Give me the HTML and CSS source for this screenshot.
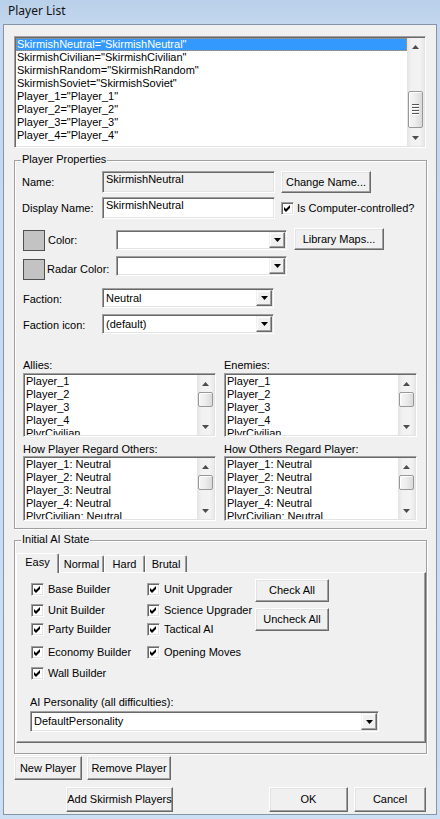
FILE: index.html
```html
<!DOCTYPE html>
<html>
<head>
<meta charset="utf-8">
<title>Player List</title>
<link rel="stylesheet" href="styles.css">
</head>
<body>
<div class="window">
  <div class="titlebar">Player List</div>
  <div class="client">
    <div class="sunken listbox main-list">
      <ul class="items">
        <li class="sel">SkirmishNeutral="SkirmishNeutral"</li>
        <li>SkirmishCivilian="SkirmishCivilian"</li>
        <li>SkirmishRandom="SkirmishRandom"</li>
        <li>SkirmishSoviet="SkirmishSoviet"</li>
        <li>Player_1="Player_1"</li>
        <li>Player_2="Player_2"</li>
        <li>Player_3="Player_3"</li>
        <li>Player_4="Player_4"</li>
      </ul>
      <div class="vscroll">
        <div class="sb-arrow"><svg width="7" height="4" viewBox="0 0 7 4"><polygon points="3.5,0 7,4 0,4" fill="#4d4d4d"/></svg></div>
        <div class="sb-track"><div class="sb-thumb main-thumb"><i class="grip"></i><i class="grip"></i><i class="grip"></i><i class="grip"></i></div></div>
        <div class="sb-arrow"><svg width="7" height="4" viewBox="0 0 7 4"><polygon points="0,0 7,0 3.5,4" fill="#4d4d4d"/></svg></div>
      </div>
    </div>

    <div class="group props">
      <span class="group-title">Player Properties</span>
      <div class="row r-name">
        <span class="lbl lbl-name">Name:</span>
        <div class="sunken edit disabled">SkirmishNeutral</div>
        <div class="btn b-change">Change Name...</div>
      </div>
      <div class="row r-disp">
        <span class="lbl lbl-name">Display Name:</span>
        <div class="sunken edit">SkirmishNeutral</div>
        <div class="check-item ci-comp"><span class="sunken chk"><svg width="7" height="7" viewBox="0 0 7 7"><polygon points="0,2 2,4 6,0 6,3 2,7 0,5" fill="#000"/></svg></span><span class="chk-lbl">Is Computer-controlled?</span></div>
      </div>
      <div class="row r-color">
        <span class="swatch"></span>
        <span class="lbl lbl-color">Color:</span>
        <div class="sunken combo c-color"><span class="val"></span><span class="drop"><svg width="7" height="4" viewBox="0 0 7 4"><polygon points="0,0 7,0 3.5,4" fill="#000"/></svg></span></div>
        <div class="btn b-lib">Library Maps...</div>
      </div>
      <div class="row r-radar">
        <span class="swatch"></span>
        <span class="lbl lbl-radar">Radar Color:</span>
        <div class="sunken combo c-color"><span class="val"></span><span class="drop"><svg width="7" height="4" viewBox="0 0 7 4"><polygon points="0,0 7,0 3.5,4" fill="#000"/></svg></span></div>
      </div>
      <div class="row r-faction">
        <span class="lbl lbl-fac">Faction:</span>
        <div class="sunken combo c-fac"><span class="val">Neutral</span><span class="drop"><svg width="7" height="4" viewBox="0 0 7 4"><polygon points="0,0 7,0 3.5,4" fill="#000"/></svg></span></div>
      </div>
      <div class="row r-facicon">
        <span class="lbl lbl-fac">Faction icon:</span>
        <div class="sunken combo c-fac"><span class="val">(default)</span><span class="drop"><svg width="7" height="4" viewBox="0 0 7 4"><polygon points="0,0 7,0 3.5,4" fill="#000"/></svg></span></div>
      </div>

      <div class="lists">
        <div class="list-lbl">Allies:</div>
        <div class="list-lbl">Enemies:</div>
        <div class="sunken listbox small-list first">
          <ul class="items"><li>Player_1</li><li>Player_2</li><li>Player_3</li><li>Player_4</li><li>PlyrCivilian</li></ul>
          <div class="vscroll">
            <div class="sb-arrow"><svg width="7" height="4" viewBox="0 0 7 4"><polygon points="3.5,0 7,4 0,4" fill="#4d4d4d"/></svg></div>
            <div class="sb-track"><div class="sb-thumb small-thumb"></div></div>
            <div class="sb-arrow"><svg width="7" height="4" viewBox="0 0 7 4"><polygon points="0,0 7,0 3.5,4" fill="#4d4d4d"/></svg></div>
          </div>
        </div>
        <div class="sunken listbox small-list first">
          <ul class="items"><li>Player_1</li><li>Player_2</li><li>Player_3</li><li>Player_4</li><li>PlyrCivilian</li></ul>
          <div class="vscroll">
            <div class="sb-arrow"><svg width="7" height="4" viewBox="0 0 7 4"><polygon points="3.5,0 7,4 0,4" fill="#4d4d4d"/></svg></div>
            <div class="sb-track"><div class="sb-thumb small-thumb"></div></div>
            <div class="sb-arrow"><svg width="7" height="4" viewBox="0 0 7 4"><polygon points="0,0 7,0 3.5,4" fill="#4d4d4d"/></svg></div>
          </div>
        </div>
        <div class="list-lbl second">How Player Regard Others:</div>
        <div class="list-lbl second">How Others Regard Player:</div>
        <div class="sunken listbox small-list tall">
          <ul class="items"><li>Player_1: Neutral</li><li>Player_2: Neutral</li><li>Player_3: Neutral</li><li>Player_4: Neutral</li><li>PlyrCivilian: Neutral</li></ul>
          <div class="vscroll">
            <div class="sb-arrow"><svg width="7" height="4" viewBox="0 0 7 4"><polygon points="3.5,0 7,4 0,4" fill="#4d4d4d"/></svg></div>
            <div class="sb-track"><div class="sb-thumb small-thumb"></div></div>
            <div class="sb-arrow"><svg width="7" height="4" viewBox="0 0 7 4"><polygon points="0,0 7,0 3.5,4" fill="#4d4d4d"/></svg></div>
          </div>
        </div>
        <div class="sunken listbox small-list tall">
          <ul class="items"><li>Player_1: Neutral</li><li>Player_2: Neutral</li><li>Player_3: Neutral</li><li>Player_4: Neutral</li><li>PlyrCivilian: Neutral</li></ul>
          <div class="vscroll">
            <div class="sb-arrow"><svg width="7" height="4" viewBox="0 0 7 4"><polygon points="3.5,0 7,4 0,4" fill="#4d4d4d"/></svg></div>
            <div class="sb-track"><div class="sb-thumb small-thumb"></div></div>
            <div class="sb-arrow"><svg width="7" height="4" viewBox="0 0 7 4"><polygon points="0,0 7,0 3.5,4" fill="#4d4d4d"/></svg></div>
          </div>
        </div>
      </div>
    </div>

    <div class="group ai">
      <span class="group-title">Initial AI State</span>
      <div class="tabctl">
        <div class="tabs">
          <div class="tab active t-easy">Easy</div>
          <div class="tab t-normal">Normal</div>
          <div class="tab t-hard">Hard</div>
          <div class="tab t-brutal">Brutal</div>
        </div>
        <div class="tab-panel">
          <div class="ai-body">
            <div class="cb-grid">
              <div class="check-item"><span class="sunken chk"><svg width="7" height="7" viewBox="0 0 7 7"><polygon points="0,2 2,4 6,0 6,3 2,7 0,5" fill="#000"/></svg></span><span class="chk-lbl">Base Builder</span></div>
              <div class="check-item"><span class="sunken chk"><svg width="7" height="7" viewBox="0 0 7 7"><polygon points="0,2 2,4 6,0 6,3 2,7 0,5" fill="#000"/></svg></span><span class="chk-lbl">Unit Upgrader</span></div>
              <div class="check-item"><span class="sunken chk"><svg width="7" height="7" viewBox="0 0 7 7"><polygon points="0,2 2,4 6,0 6,3 2,7 0,5" fill="#000"/></svg></span><span class="chk-lbl">Unit Builder</span></div>
              <div class="check-item"><span class="sunken chk"><svg width="7" height="7" viewBox="0 0 7 7"><polygon points="0,2 2,4 6,0 6,3 2,7 0,5" fill="#000"/></svg></span><span class="chk-lbl">Science Upgrader</span></div>
              <div class="check-item"><span class="sunken chk"><svg width="7" height="7" viewBox="0 0 7 7"><polygon points="0,2 2,4 6,0 6,3 2,7 0,5" fill="#000"/></svg></span><span class="chk-lbl">Party Builder</span></div>
              <div class="check-item"><span class="sunken chk"><svg width="7" height="7" viewBox="0 0 7 7"><polygon points="0,2 2,4 6,0 6,3 2,7 0,5" fill="#000"/></svg></span><span class="chk-lbl">Tactical AI</span></div>
              <div class="check-item"><span class="sunken chk"><svg width="7" height="7" viewBox="0 0 7 7"><polygon points="0,2 2,4 6,0 6,3 2,7 0,5" fill="#000"/></svg></span><span class="chk-lbl">Economy Builder</span></div>
              <div class="check-item"><span class="sunken chk"><svg width="7" height="7" viewBox="0 0 7 7"><polygon points="0,2 2,4 6,0 6,3 2,7 0,5" fill="#000"/></svg></span><span class="chk-lbl">Opening Moves</span></div>
              <div class="check-item"><span class="sunken chk"><svg width="7" height="7" viewBox="0 0 7 7"><polygon points="0,2 2,4 6,0 6,3 2,7 0,5" fill="#000"/></svg></span><span class="chk-lbl">Wall Builder</span></div>
            </div>
            <div class="ai-buttons">
              <div class="btn b-check">Check All</div>
              <div class="btn b-check">Uncheck All</div>
            </div>
          </div>
          <div class="pers-lbl">AI Personality (all difficulties):</div>
          <div class="sunken combo c-pers"><span class="val">DefaultPersonality</span><span class="drop"><svg width="7" height="4" viewBox="0 0 7 4"><polygon points="0,0 7,0 3.5,4" fill="#000"/></svg></span></div>
        </div>
      </div>
    </div>

    <div class="btn-row row1">
      <div class="btn b-new">New Player</div>
      <div class="btn b-remove">Remove Player</div>
    </div>
    <div class="btn-row row2">
      <div class="btn b-add">Add Skirmish Players</div>
      <div class="btn b-ok">OK</div>
      <div class="btn b-cancel">Cancel</div>
    </div>
  </div>
</div>
</body>
</html>
```

FILE: styles.css
```css
* { box-sizing: border-box; margin: 0; padding: 0; }
html, body { width: 440px; height: 819px; overflow: hidden; }
body {
  background: linear-gradient(180deg, #b9d0ea 0, #c3d7ee 24px, #cddff3 100%);
  font-family: "Liberation Sans", Arial, sans-serif;
  font-size: 11px;
  line-height: 13px;
  color: #000;
}
.window { width: 440px; height: 819px; display: flex; flex-direction: column; }
.titlebar {
  flex: none; height: 24px; padding-left: 8px;
  font-family: "Noto Sans", "Liberation Sans", sans-serif;
  font-size: 12px; line-height: 22px; color: #111;
}
.client {
  flex: none; margin-left: 3px; width: 434px; height: 791px;
  background: #f0f0f0; border: 1px solid #8595a8;
  display: flex; flex-direction: column;
}

/* generic 3D edges */
.sunken {
  border: 1px solid; border-color: #a0a0a0 #fff #fff #a0a0a0;
  box-shadow: inset 1px 1px 0 #696969, inset -1px -1px 0 #e3e3e3;
  padding: 1px;
}
.btn {
  background: #f0f0f0;
  border: 1px solid; border-color: #fff #696969 #696969 #fff;
  box-shadow: inset -1px -1px 0 #a0a0a0, inset 1px 1px 0 #e3e3e3;
  display: flex; align-items: center; justify-content: center;
  white-space: nowrap;
}

/* list boxes */
.listbox { display: flex; background: #fff; }
.items { flex: 1; list-style: none; overflow: hidden; }
.items li { height: 13px; line-height: 13px; padding-left: 1px; white-space: nowrap; }
.items li.sel { background: #3399ff; color: #fff; outline: 1px dotted #d98c3a; outline-offset: -1px; }
.main-list { margin: 11px 0 0 10px; width: 412px; height: 112px; }

.vscroll {
  flex: none; width: 17px; display: flex; flex-direction: column;
  background: linear-gradient(90deg, #e3e3e3 0, #f1f1f1 25%, #f3f3f3 75%, #e8e8e8 100%);
}
.sb-arrow { flex: none; height: 17px; display: flex; align-items: center; justify-content: center; }
.sb-track { flex: 1; }
.sb-thumb {
  margin: 0 1px; border: 1px solid #989898; border-radius: 2px;
  background: linear-gradient(90deg, #f6f6f6 0, #ececec 50%, #dadada 100%);
  box-shadow: inset 1px 1px 0 #fff;
  display: flex; flex-direction: column; align-items: center; justify-content: center; gap: 1px;
}
.main-thumb { margin-top: 36px; height: 37px; }
.small-thumb { height: 15px; }
.grip { display: block; width: 7px; height: 1px; background: #555; box-shadow: 0 1px 0 #fff; margin-bottom: 1px; }

/* group boxes */
.group {
  position: relative; flex: none; margin-left: 10px; width: 413px;
  border: 1px solid #a0a0a0;
  box-shadow: inset 1px 1px 0 #fff, 1px 1px 0 #fff;
}
.group-title {
  position: absolute; top: -8px; left: 6px; padding: 0 1px;
  background: #f0f0f0; line-height: 13px;
}
.props { margin-top: 12px; padding-bottom: 7px; }

.row { display: flex; align-items: flex-start; }
.lbl { white-space: nowrap; }
.r-name { margin-top: 10px; height: 22px; align-items: center; }
.r-disp { margin-top: 4px; height: 22px; align-items: center; }
.lbl-name { margin-left: 7px; width: 80px; }
.edit { width: 173px; height: 22px; background: #fff; padding: 1px 3px; line-height: 13px; white-space: nowrap; }
.edit.disabled { background: #f0f0f0; }
.r-name .edit, .r-disp .edit { align-self: flex-start; }
.b-change { margin-left: 6px; width: 90px; height: 22px; }

.check-item { display: flex; align-items: center; white-space: nowrap; }
.chk { width: 13px; height: 13px; background: #fff; display: flex; align-items: center; justify-content: center; flex: none; }
.chk-lbl { margin-left: 3px; }
.ci-comp { margin-left: 6px; }

.r-color { margin-top: 9px; }
.r-radar { margin-top: 5px; }
.swatch { flex: none; margin-left: 8px; width: 22px; height: 21px; background: #c3c3c3; border: 1px solid #505050; }
.r-color .swatch { margin-top: 2px; }
.r-radar .swatch { margin-top: 3px; }
.lbl-color { margin-left: 3px; width: 68px; height: 21px; line-height: 21px; margin-top: 2px; }
.lbl-radar { margin-left: 2px; width: 69px; height: 21px; line-height: 21px; margin-top: 3px; }
.combo { display: flex; background: #fff; height: 20px; flex: none; }
.combo .val { flex: 1; padding-left: 2px; line-height: 16px; white-space: nowrap; overflow: hidden; }
.combo .drop {
  flex: none; width: 16px; height: 16px; background: #f0f0f0;
  border: 1px solid; border-color: #f0f0f0 #696969 #696969 #f0f0f0;
  box-shadow: inset -1px -1px 0 #a0a0a0, inset 1px 1px 0 #fff;
  display: flex; align-items: center; justify-content: center;
}
.c-color { width: 171px; }
.r-color .c-color { margin-top: 2px; }
.b-lib { margin-left: 7px; width: 90px; height: 22px; }

.r-faction { margin-top: 8px; height: 20px; }
.r-facicon { margin-top: 6px; height: 20px; }
.lbl-fac { margin-left: 8px; width: 79px; height: 20px; line-height: 18px; padding-top: 2px; }
.c-fac { width: 172px; }

.lists {
  margin: 25px 0 0 8px;
  display: grid; grid-template-columns: 193px 193px; column-gap: 8px;
}
.list-lbl { height: 13px; line-height: 13px; white-space: nowrap; }
.list-lbl.second { margin-top: 6px; }
.small-list.first { margin-top: 1px; height: 64px; }
.small-list.tall { height: 65px; }

/* AI group */
.ai { margin-top: 11px; height: 214px; }
.tabctl { margin: 12px 0 0 1px; width: 410px; }
.tabs { display: flex; align-items: flex-end; height: 19px; position: relative; z-index: 1; }
.tab {
  height: 17px; background: #f0f0f0;
  border: 1px solid; border-bottom: none; border-color: #fff #696969 transparent #fff;
  box-shadow: inset -1px 0 0 #a0a0a0;
  border-radius: 2px 2px 0 0;
  text-align: center; line-height: 15px; padding-top: 1px;
}
.tab.active { height: 20px; margin-bottom: -1px; line-height: 15px; padding-top: 1px; }
.t-easy { width: 43px; }
.t-normal { width: 45px; }
.t-hard { width: 41px; }
.t-brutal { width: 42px; }
.tab-panel {
  height: 171px;
  border: 1px solid; border-color: #fff #696969 #696969 #fff;
  box-shadow: inset -1px -1px 0 #a0a0a0;
}
.ai-body { display: flex; padding-left: 14px; }
.cb-grid {
  margin-top: 10px; width: 224px;
  display: grid; grid-template-columns: 116px 108px;
  grid-template-rows: 21px 19px 23px 21px 13px;
  align-items: start;
}
.cb-grid .check-item { height: 13px; }
.cb-grid .chk-lbl { margin-left: 4px; }
.ai-buttons { margin-top: 6px; display: flex; flex-direction: column; gap: 6px; }
.b-check { width: 74px; height: 23px; }
.pers-lbl { margin: 16px 0 0 13px; height: 13px; }
.c-pers { margin: 2px 0 0 13px; width: 349px; height: 21px; }
.c-pers .val { padding-left: 2px; line-height: 17px; }
.c-pers .drop { height: 17px; }

/* bottom buttons */
.btn-row { display: flex; flex: none; }
.row1 { margin: 2px 0 0 10px; }
.row2 { margin: 7px 0 0 62px; }
.b-new { width: 68px; height: 24px; }
.b-remove { margin-left: 5px; width: 84px; height: 24px; }
.b-add { width: 107px; height: 25px; }
.b-ok { margin-left: 96px; width: 79px; height: 25px; }
.b-cancel { margin-left: 6px; width: 72px; height: 25px; }
```
